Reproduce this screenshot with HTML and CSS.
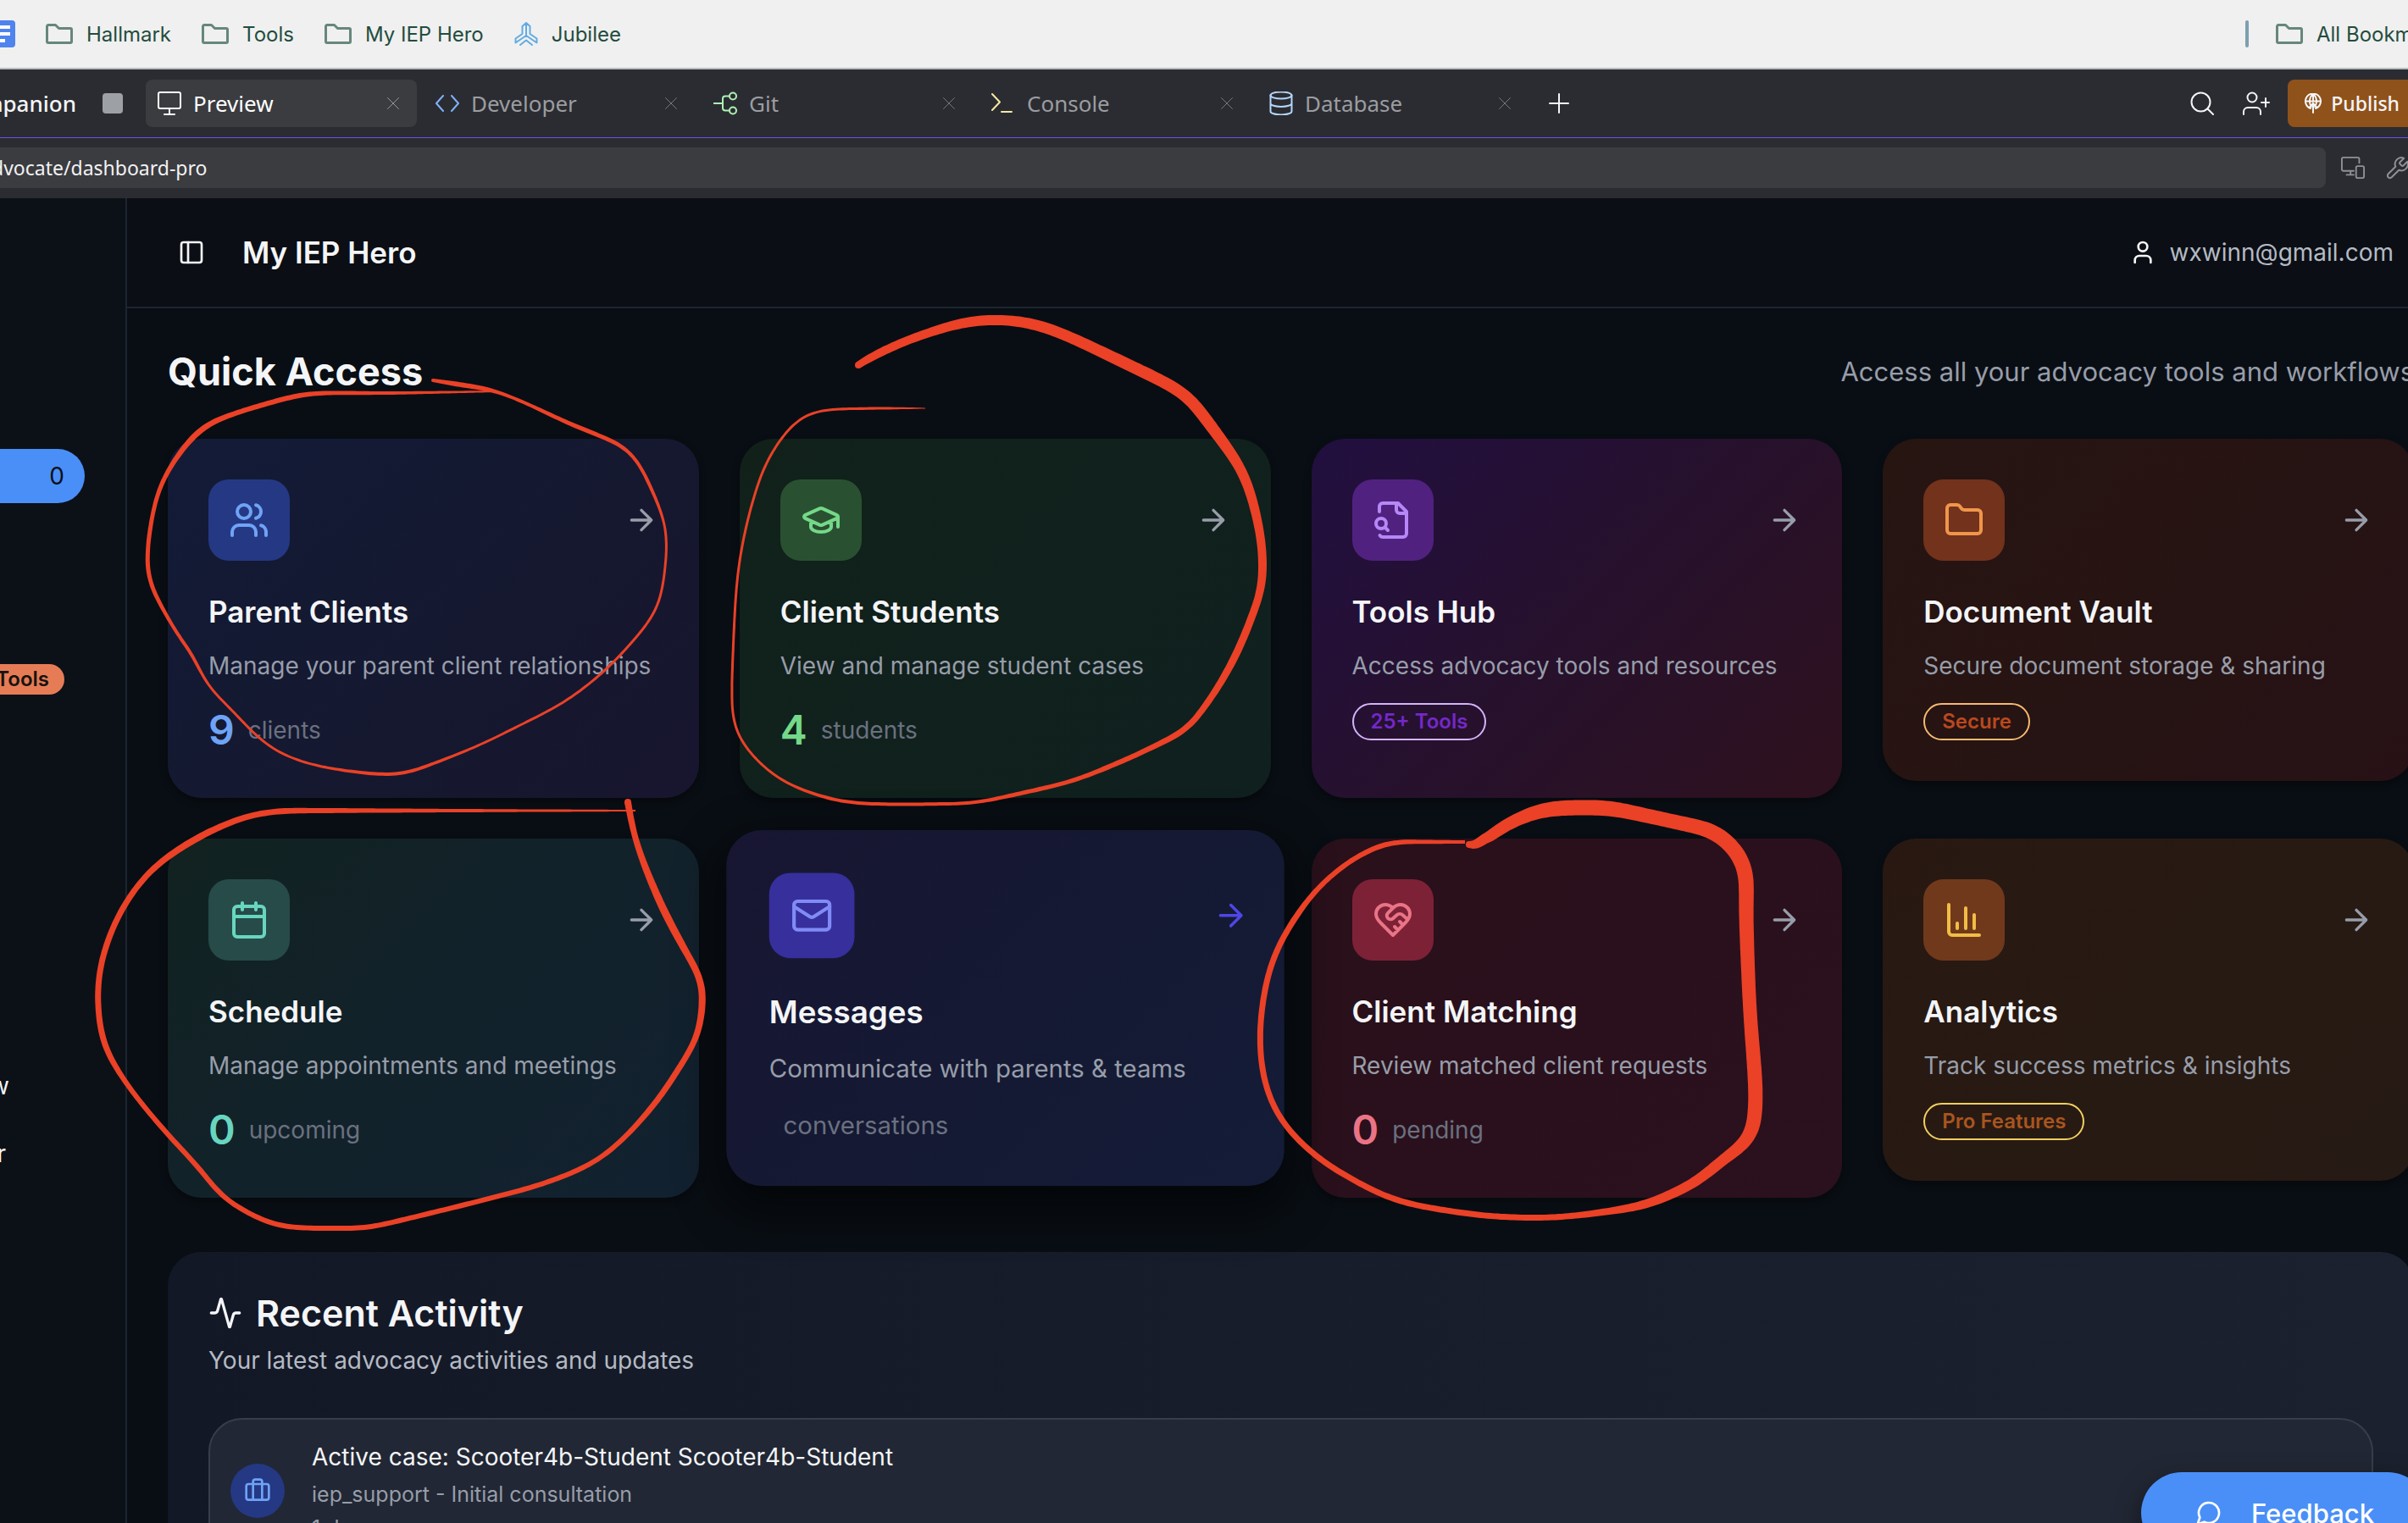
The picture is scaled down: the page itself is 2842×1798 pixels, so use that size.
FILE: index.html
```html
<!DOCTYPE html>
<html lang="en">
<head>
<meta charset="utf-8">
<title>My IEP Hero</title>
<link rel="stylesheet" href="styles.css">
</head>
<body>
<svg class="sprite" aria-hidden="true">
  <symbol id="i-arrow" viewBox="0 0 24 24"><path d="M5 12h14M12 5l7 7-7 7"/></symbol>
  <symbol id="i-users" viewBox="0 0 24 24"><path d="M16 21v-2a4 4 0 0 0-4-4H6a4 4 0 0 0-4 4v2M22 21v-2a4 4 0 0 0-3-3.87M16 3.13a4 4 0 0 1 0 7.75"/><circle cx="9" cy="7" r="4"/></symbol>
  <symbol id="i-cap" viewBox="0 0 24 24"><path d="M21.42 10.922a1 1 0 0 0-.019-1.838L12.83 5.18a2 2 0 0 0-1.66 0L2.6 9.08a1 1 0 0 0 0 1.832l8.57 3.908a2 2 0 0 0 1.66 0zM22 10v6M6 12.5V16a6 3 0 0 0 12 0v-3.5"/></symbol>
  <symbol id="i-file" viewBox="0 0 24 24"><path d="M14 2v4a2 2 0 0 0 2 2h4M4.268 21a2 2 0 0 0 1.727 1H18a2 2 0 0 0 2-2V7l-5-5H6a2 2 0 0 0-2 2v3M9 18l-1.500-1.500"/><circle cx="5" cy="14" r="3"/></symbol>
  <symbol id="i-folder" viewBox="0 0 24 24"><path d="M20 20a2 2 0 0 0 2-2V8a2 2 0 0 0-2-2h-7.900a2 2 0 0 1-1.690-.900L9.600 3.900A2 2 0 0 0 7.930 3H4a2 2 0 0 0-2 2v13a2 2 0 0 0 2 2Z"/></symbol>
  <symbol id="i-calendar" viewBox="0 0 24 24"><path d="M8 2v4M16 2v4M3 10h18"/><rect x="3" y="4" width="18" height="18" rx="2"/></symbol>
  <symbol id="i-mail" viewBox="0 0 24 24"><rect x="2" y="4" width="20" height="16" rx="2"/><path d="m22 7-8.970 5.700a1.940 1.940 0 0 1-2.060 0L2 7"/></symbol>
  <symbol id="i-heart" viewBox="0 0 24 24"><path d="M19 14c1.490-1.460 3-3.210 3-5.500A5.500 5.500 0 0 0 16.500 3c-1.760 0-3 .500-4.500 2-1.500-1.500-2.740-2-4.500-2A5.500 5.500 0 0 0 2 8.500c0 2.300 1.500 4.050 3 5.500l7 7ZM12 5 9.040 7.960a2.170 2.170 0 0 0 0 3.080c.820.820 2.130.850 3 .070l2.070-1.900a2.820 2.820 0 0 1 3.790 0l2.960 2.660M18 15l-2-2M15 18l-2-2"/></symbol>
  <symbol id="i-chart" viewBox="0 0 24 24"><path d="M3 3v16a2 2 0 0 0 2 2h16M18 17V9M13 17V5M8 17v-3"/></symbol>
  <symbol id="i-activity" viewBox="0 0 24 24"><path d="M22 12h-2.480a2 2 0 0 0-1.930 1.460l-2.350 8.360a.250.250 0 0 1-.480 0L9.240 2.180a.250.250 0 0 0-.480 0l-2.350 8.360A2 2 0 0 1 4.490 12H2"/></symbol>
  <symbol id="i-panel" viewBox="0 0 24 24"><rect x="3" y="3" width="18" height="18" rx="2"/><path d="M9 3v18"/></symbol>
  <symbol id="i-user" viewBox="0 0 24 24"><path d="M19 21v-2a4 4 0 0 0-4-4H9a4 4 0 0 0-4 4v2"/><circle cx="12" cy="7" r="4"/></symbol>
  <symbol id="i-chat" viewBox="0 0 24 24"><path d="M7.900 20A9 9 0 1 0 4 16.100L2 22Z"/></symbol>
  <symbol id="i-case" viewBox="0 0 24 24"><path d="M16 20V4a2 2 0 0 0-2-2h-4a2 2 0 0 0-2 2v16"/><rect x="2" y="6" width="20" height="14" rx="2"/></symbol>
  <symbol id="i-bookmark-folder" viewBox="0 0 32 24"><path d="M3 1.500h8.500l4 4H29a1.500 1.500 0 0 1 1.500 1.500v14a1.500 1.500 0 0 1-1.500 1.500H3A1.500 1.500 0 0 1 1.500 21V3A1.500 1.500 0 0 1 3 1.500Z"/></symbol>
  <symbol id="i-close" viewBox="0 0 14 14"><path d="M.500.500l13 13M13.500.500l-13 13"/></symbol>
</svg>

<nav class="bookmarks" aria-label="Bookmarks">
  <a class="doc-mark" href="#" aria-label="Document"><svg viewBox="0 0 18 32"><path class="doc-bg" d="M0 0h14a4 4 0 0 1 4 4v24a4 4 0 0 1-4 4H0z"/><path class="doc-lines" d="M0 8h12M0 16h12M0 24h6"/></svg></a>
  <a class="bookmark" href="#"><svg class="fold"><use href="#i-bookmark-folder"/></svg>Hallmark</a>
  <a class="bookmark" href="#"><svg class="fold"><use href="#i-bookmark-folder"/></svg>Tools</a>
  <a class="bookmark" href="#"><svg class="fold"><use href="#i-bookmark-folder"/></svg>My IEP Hero</a>
  <a class="bookmark" href="#"><svg class="jubilee" viewBox="0 0 28 28"><path d="M14 1v14M9.500 5v9l-8 5.500v5L14 16l12.500 8.500v-5l-8-5.500V5L14 1 9.500 5M7 27l7-5.500 7 5.500"/></svg>Jubilee</a>
  <span class="divider"></span>
  <a class="bookmark all" href="#"><svg class="fold"><use href="#i-bookmark-folder"/></svg>All Bookmarks</a>
</nav>

<header class="toolbar">
  <div class="run"><span>mpanion</span><button class="stop" aria-label="Stop"></button></div>
  <div class="tabs">
    <div class="tab active"><svg class="tab-icon" viewBox="0 0 28 28"><rect x="1" y="1" width="26" height="19" rx="2"/><path d="M14 20v7M8 27h12"/></svg><span>Preview</span><button class="close" aria-label="Close Preview"><svg><use href="#i-close"/></svg></button></div>
    <div class="tab blue"><svg class="tab-icon" viewBox="0 0 28 28"><path d="M9 5l-8 9 8 9M19 5l8 9-8 9"/></svg><span>Developer</span><button class="close" aria-label="Close Developer"><svg><use href="#i-close"/></svg></button></div>
    <div class="tab green"><svg class="tab-icon" viewBox="0 0 28 28"><path d="M0 14h11M19 5.500h-5a3 3 0 0 0-3 3v11a3 3 0 0 0 3 3h5"/><circle cx="23" cy="5.500" r="4"/><circle cx="23" cy="22.500" r="4"/></svg><span>Git</span><button class="close" aria-label="Close Git"><svg><use href="#i-close"/></svg></button></div>
    <div class="tab yellow"><svg class="tab-icon" viewBox="0 0 28 28"><path d="M1 3l9 9.500L1 22M12 24h12"/></svg><span>Console</span><button class="close" aria-label="Close Console"><svg><use href="#i-close"/></svg></button></div>
    <div class="tab sky"><svg class="tab-icon" viewBox="0 0 28 28"><ellipse cx="14" cy="4.500" rx="12.500" ry="4"/><path d="M1.500 4.500v19c0 2.200 5.600 4 12.500 4s12.500-1.800 12.500-4v-19M1.500 14c0 2.200 5.600 4 12.500 4s12.500-1.800 12.500-4"/></svg><span>Database</span><button class="close" aria-label="Close Database"><svg><use href="#i-close"/></svg></button></div>
  </div>
  <button class="icon-btn plus" aria-label="New tab"><svg viewBox="0 0 24 24"><path d="M12 1v22M1 12h22"/></svg></button>
  <div class="tools">
    <button class="icon-btn" aria-label="Search"><svg viewBox="0 0 28 28"><circle cx="12.500" cy="12.500" r="11"/><path d="M20.500 20.500l6.500 6.500"/></svg></button>
    <button class="icon-btn invite" aria-label="Invite"><svg viewBox="0 0 32 28"><circle cx="11" cy="7" r="5.500"/><path d="M1 27v-3a5 5 0 0 1 5-5h10a5 5 0 0 1 5 5v3M27 8v10M22 13h9"/></svg></button>
    <button class="publish"><svg viewBox="0 0 20 24"><path d="M7 18a9 9 0 1 1 6 0M1 9.500h18M10 1C5 5 5 12 8 16M10 1c5 4 5 11 2 15M10 1v9M10 23V12M5.500 17l4.500-5 4.500 5"/></svg>Publish</button>
  </div>
</header>

<div class="addressbar">
  <input class="url" type="text" aria-label="Address" value="dvocate/dashboard-pro">
  <button class="icon-btn dim" aria-label="Device preview"><svg viewBox="0 0 30 28"><path d="M16 18H3a2 2 0 0 1-2-2V3a2 2 0 0 1 2-2h18a2 2 0 0 1 2 2v5M7 23h9M12 18v5"/><rect x="19" y="12" width="10" height="15" rx="2"/></svg></button>
  <button class="icon-btn dim" aria-label="Developer tools"><svg viewBox="0 0 28 28"><path d="M17.500 7.500a1.300 1.300 0 0 0 0 2l2 2a1.300 1.300 0 0 0 2 0l4.700-4.700a7.500 7.500 0 0 1-9.900 9.900l-8.600 8.600a2.600 2.600 0 0 1-4-4l8.600-8.600A7.500 7.500 0 0 1 22.200 2.800z"/></svg></button>
</div>

<div class="app">
  <aside class="sidebar">
    <a class="side-pill" href="#">0</a>
    <span class="side-badge">Tools</span>
    <a class="side-link" href="#">w</a>
    <a class="side-link" href="#">r</a>
  </aside>
  <div class="content">
    <header class="app-header">
      <button class="icon-btn" aria-label="Toggle sidebar"><svg class="i32"><use href="#i-panel"/></svg></button>
      <h1>My IEP Hero</h1>
      <div class="account"><svg class="i32"><use href="#i-user"/></svg><span>wxwinn@gmail.com</span></div>
    </header>
    <main>
      <div class="section-head">
        <h2>Quick Access</h2>
        <p>Access all your advocacy tools and workflows</p>
      </div>
      <div class="grid">
        <a class="card parents" href="#">
          <span class="card-top"><span class="tile"><svg><use href="#i-users"/></svg></span><svg class="arrow"><use href="#i-arrow"/></svg></span>
          <span class="card-title">Parent Clients</span>
          <span class="card-desc">Manage your parent client relationships</span>
          <span class="stat"><b>9</b><span>clients</span></span>
        </a>
        <a class="card students" href="#">
          <span class="card-top"><span class="tile"><svg><use href="#i-cap"/></svg></span><svg class="arrow"><use href="#i-arrow"/></svg></span>
          <span class="card-title">Client Students</span>
          <span class="card-desc">View and manage student cases</span>
          <span class="stat"><b>4</b><span>students</span></span>
        </a>
        <a class="card hub" href="#">
          <span class="card-top"><span class="tile"><svg><use href="#i-file"/></svg></span><svg class="arrow"><use href="#i-arrow"/></svg></span>
          <span class="card-title">Tools Hub</span>
          <span class="card-desc">Access advocacy tools and resources</span>
          <span class="badge">25+ Tools</span>
        </a>
        <a class="card vault short" href="#">
          <span class="card-top"><span class="tile"><svg><use href="#i-folder"/></svg></span><svg class="arrow"><use href="#i-arrow"/></svg></span>
          <span class="card-title">Document Vault</span>
          <span class="card-desc">Secure document storage &amp; sharing</span>
          <span class="badge">Secure</span>
        </a>
        <a class="card schedule" href="#">
          <span class="card-top"><span class="tile"><svg><use href="#i-calendar"/></svg></span><svg class="arrow"><use href="#i-arrow"/></svg></span>
          <span class="card-title">Schedule</span>
          <span class="card-desc">Manage appointments and meetings</span>
          <span class="stat"><b>0</b><span>upcoming</span></span>
        </a>
        <a class="card messages short raised" href="#">
          <span class="card-top"><span class="tile"><svg><use href="#i-mail"/></svg></span><svg class="arrow"><use href="#i-arrow"/></svg></span>
          <span class="card-title">Messages</span>
          <span class="card-desc">Communicate with parents &amp; teams</span>
          <span class="stat"><b></b><span>conversations</span></span>
        </a>
        <a class="card matching" href="#">
          <span class="card-top"><span class="tile"><svg><use href="#i-heart"/></svg></span><svg class="arrow"><use href="#i-arrow"/></svg></span>
          <span class="card-title">Client Matching</span>
          <span class="card-desc">Review matched client requests</span>
          <span class="stat"><b>0</b><span>pending</span></span>
        </a>
        <a class="card analytics short" href="#">
          <span class="card-top"><span class="tile"><svg><use href="#i-chart"/></svg></span><svg class="arrow"><use href="#i-arrow"/></svg></span>
          <span class="card-title">Analytics</span>
          <span class="card-desc">Track success metrics &amp; insights</span>
          <span class="badge">Pro Features</span>
        </a>
      </div>
      <section class="activity">
        <h2><svg><use href="#i-activity"/></svg>Recent Activity</h2>
        <p class="activity-sub">Your latest advocacy activities and updates</p>
        <div class="entry">
          <span class="entry-icon"><svg class="i32"><use href="#i-case"/></svg></span>
          <div>
            <p class="entry-title">Active case: Scooter4b-Student Scooter4b-Student</p>
            <p class="entry-sub">iep_support - Initial consultation</p>
            <p class="entry-sub">1 day ago</p>
          </div>
        </div>
      </section>
    </main>
  </div>
</div>
<button class="feedback"><svg class="i32"><use href="#i-chat"/></svg>Feedback</button>
<svg class="marker" id="marker" aria-hidden="true"></svg>
<script src="marker.js"></script>
</body>
</html>
```
FILE: styles.css
```css
* { box-sizing: border-box; }
html, body { height: 100%; }
body {
  margin: 0;
  overflow: hidden;
  position: relative;
  display: flex;
  flex-direction: column;
  background: #090e14;
  color: #f4f5f7;
  font-family: Inter, sans-serif;
  font-size: 28px;
}
h1, h2, p { margin: 0; }
a { color: inherit; text-decoration: none; }
button { font: inherit; color: inherit; background: none; border: 0; padding: 0; }
svg { fill: none; stroke: currentColor; stroke-width: 2; stroke-linecap: round; stroke-linejoin: round; display: block; flex: none; }
.sprite { position: absolute; width: 0; height: 0; }
.i32 { width: 32px; height: 32px; }

/* browser bookmarks */
.bookmarks {
  flex: none;
  display: flex;
  align-items: center;
  height: 82px;
  background: #f0f0f0;
  border-bottom: 2px solid #b7bbbf;
  color: #234c3e;
  font-size: 24px;
  overflow: hidden;
}
.doc-mark { flex: none; margin-right: 36px; }
.doc-mark svg { width: 18px; height: 32px; }
.doc-bg { fill: #4f83ee; stroke: none; }
.doc-lines { stroke: #fff; stroke-width: 4; stroke-linecap: butt; }
.bookmark { flex: none; display: flex; align-items: center; gap: 16px; margin-right: 36px; }
.bookmark.all { width: 156px; margin: 0; white-space: nowrap; }
.fold { width: 32px; height: 24px; color: #66877b; stroke-width: 3; }
.jubilee { width: 28px; height: 28px; color: #62abe0; }
.divider { margin: 0 32px 0 auto; width: 4px; height: 32px; border-radius: 2px; background: #7d9fb0; flex: none; }

/* workspace tabs */
.toolbar {
  flex: none;
  display: flex;
  align-items: center;
  height: 81px;
  background: #2b2c31;
  border-bottom: 1px solid #6d51ee;
  font-family: "Noto Sans", sans-serif;
  font-size: 26px;
  overflow: hidden;
}
.run { width: 172px; flex: none; display: flex; align-items: center; justify-content: flex-end; gap: 31px; padding-right: 27px; font-weight: 500; }
.stop { width: 24px; height: 24px; border-radius: 4px; background: #9da1a6; flex: none; }
.tabs { display: flex; gap: 8px; flex: none; }
.tab { width: 320px; height: 56px; border-radius: 8px; padding: 0 16px 0 14px; display: flex; align-items: center; gap: 14px; color: #9b9da1; }
.tab.active { background: #3b3c40; color: #fff; }
.tab-icon { width: 28px; height: 28px; }
.blue .tab-icon { color: #7db2fa; }
.green .tab-icon { color: #aef0b5; }
.yellow .tab-icon { color: #f5e8a3; }
.sky .tab-icon { color: #b4d6fb; }
.close { width: 24px; height: 24px; margin-left: auto; display: grid; place-items: center; color: #77797d; }
.active .close { color: #96989c; }
.close svg { width: 14px; height: 14px; stroke-width: 1; }
.icon-btn { flex: none; }
.icon-btn svg { height: 28px; width: 28px; }
.plus { margin-left: 24px; }
.plus svg { width: 24px; height: 24px; }
.tools { margin-left: auto; display: flex; align-items: center; gap: 34px; margin-right: -10px; }
.tools .invite svg { width: 32px; }
.publish { height: 56px; margin-left: -13px; padding: 0 20px; border-radius: 8px; background: #8f521b; display: flex; align-items: center; gap: 11px; font-size: 23px; font-weight: 500; }
.publish svg { width: 20px; height: 24px; stroke-width: 2; }

/* address bar */
.addressbar { flex: none; display: flex; align-items: center; gap: 24px; height: 71px; background: #2b2c31; overflow: hidden; padding-bottom: 1px; }
.url { flex: 1; height: 48px; margin-right: -6px; padding: 0 8px 0 0; text-indent: -10px; border: 0; border-radius: 0 8px 8px 0; background: #3b3c40; color: #f2f2f3; font-family: "Noto Sans", sans-serif; font-size: 23px; }
.dim { color: #8f9195; }
.dim:last-child { margin-right: -1px; }

/* application */
.app { flex: 1; min-height: 0; display: flex; width: calc(100% + 55px); }
.sidebar { flex: none; width: 150px; background: #0c1118; border-right: 2px solid #1b2530; padding-top: 296px; display: flex; flex-direction: column; align-items: flex-start; overflow: hidden; }
.side-pill { width: 100px; height: 64px; line-height: 64px; padding-right: 24px; text-align: right; border-radius: 0 32px 32px 0; background: #4a8ff7; color: #0b1018; flex: none; }
.side-badge { width: 76px; height: 36px; line-height: 36px; margin: 190px 0 442px; padding-right: 18px; display: flex; justify-content: flex-end; border-radius: 0 18px 18px 0; background: #e67c56; color: #16130f; font-size: 24px; font-weight: 600; flex: none; }
.side-link { width: 11px; height: 40px; line-height: 40px; display: flex; justify-content: flex-end; margin-bottom: 40px; flex: none; }
.side-link:last-child { width: 7px; }
.content { flex: 1; min-width: 0; overflow: hidden; }
.app-header { height: 130px; padding: 0 72px 0 60px; display: flex; align-items: center; border-bottom: 2px solid #1b2530; background: #0b0e14; }
.app-header .icon-btn svg { width: 32px; height: 32px; }
.app-header h1 { margin-left: 44px; font-size: 35px; font-weight: 600; }
.account { margin-left: auto; display: flex; align-items: center; gap: 16px; color: #b4bac4; }
.account svg { color: #f4f5f7; }
main { padding: 46px 48px 48px; }
.section-head { display: flex; justify-content: space-between; align-items: center; margin-bottom: 50px; }
.section-head h2 { font-size: 45px; line-height: 58px; font-weight: 700; }
.section-head p { font-size: 31px; line-height: 58px; color: #979da9; }

.grid { display: grid; grid-template-columns: repeat(4, minmax(0, 1fr)); gap: 48px; margin-bottom: 64px; }
.card { display: flex; flex-direction: column; align-items: flex-start; padding: 48px; border-radius: 40px; box-shadow: 0 4px 8px rgba(0, 0, 0, .35); white-space: nowrap; }
.short { align-self: start; }
.card-top { display: flex; justify-content: space-between; align-items: center; width: 100%; }
.tile { width: 96px; height: 96px; border-radius: 24px; display: grid; place-items: center; }
.tile svg { width: 48px; height: 48px; }
.arrow { width: 40px; height: 40px; color: #979da9; }
.card-title { margin-top: 32px; font-size: 35px; line-height: 56px; font-weight: 600; color: #f4f5f7; }
.card-desc { margin-top: 16px; line-height: 40px; color: #979da9; }
.stat { margin-top: 24px; display: flex; align-items: center; gap: 16px; line-height: 40px; color: #6a7180; }
.stat b { font-size: 48px; line-height: 64px; font-weight: 600; }
.stat b:empty { display: block; }
.badge { margin-top: 24px; height: 44px; line-height: 40px; padding: 0 20px; border: 2px solid; border-radius: 22px; font-size: 24px; font-weight: 600; }

.parents { background: linear-gradient(135deg, #131b37, #15182f 60%, #18152f); }
.parents .tile { background: #253884; color: #6fa3f5; }
.parents b { color: #6fa3f5; }
.students { background: linear-gradient(135deg, #11211a, #10201f); }
.students .tile { background: #295131; color: #75d889; }
.students b { color: #75d889; }
.hub { background: linear-gradient(135deg, #210f40, #27112b 55%, #2e111d); }
.hub .tile { background: #51217f; color: #b587f7; }
.hub .badge { border-color: #d4b4fb; color: #7428c8; }
.vault { background: linear-gradient(135deg, #271512, #261313 60%, #271116); }
.vault .tile { background: #72321c; color: #f0964a; }
.vault .badge { border-color: #f6b970; color: #b9481f; }
.schedule { background: linear-gradient(135deg, #112220, #122229 40%, #122130); }
.schedule .tile { background: #264b49; color: #68d5bf; }
.schedule b { color: #68d5bf; }
.messages { background: linear-gradient(135deg, #181632, #151933 50%, #141c37); }
.messages .tile { background: #362f9c; color: #818bf6; }
.messages .arrow { color: #4f46e5; transform: translateX(8px); }
.raised { transform: scale(1.05); box-shadow: 0 20px 50px 6px rgba(0, 0, 0, .6); }
.matching { background: linear-gradient(135deg, #29101a, #2b101e); }
.matching .tile { background: #7d2137; color: #ea7486; }
.matching b { color: #ea7486; }
.analytics { background: linear-gradient(135deg, #291812, #271a13 50%, #261a14); }
.analytics .tile { background: #70391b; color: #f2bd45; }
.analytics .badge { border-color: #f2cf5e; color: #a9551f; }

.activity { padding: 40px 48px 48px; min-height: 400px; border-radius: 40px; background: linear-gradient(90deg, #131826, #181d2b 50%, #1b212e); }
.activity h2 { display: flex; align-items: center; gap: 16px; font-size: 43px; line-height: 64px; font-weight: 600; }
.activity h2 svg { width: 40px; height: 40px; }
.activity-sub { line-height: 40px; margin: 4px 0 48px; color: #b4bac4; }
.entry { display: flex; align-items: center; gap: 32px; padding: 24px; border: 2px solid #373e4a; border-radius: 40px; background: #212734; }
.entry-icon { width: 64px; height: 64px; border-radius: 50%; background: #253884; color: #6fa3f5; display: grid; place-items: center; flex: none; }
.entry-title { line-height: 40px; }
.entry-sub { margin-top: 8px; font-size: 25px; line-height: 32px; color: #979da9; }

.feedback { position: absolute; right: -24px; bottom: -36px; height: 96px; padding: 0 64px; border-radius: 48px; background: #4a8ff7; color: #fff; display: flex; align-items: center; gap: 34px; font-size: 31px; font-weight: 500; box-shadow: 0 12px 30px rgba(0, 0, 0, .5); }
.marker { position: absolute; left: 0; top: 0; width: 100%; height: 100%; pointer-events: none; overflow: hidden; stroke: none; fill: #ea4127; }
```
FILE: marker.js
```js
// Pen strokes drawn over the page: each point is x, y, pen width.
const strokes = [
  [511,449,4, 542,454,6, 575,459,5, 591,464,4, 623,477,4, 672,500,5, 721,520,5, 743,533,4, 760,558,4, 772,585,4, 782,609,3, 787,640,3, 783,687,3, 777,713,3, 765,735,3, 737,768,3, 710,795,3, 667,828,3, 612,857,3, 558,883,3, 488,910,4, 466,914,4, 434,913,4, 374,904,3, 331,889,3, 303,869,3, 282,847,3, 244,807,3, 230,778,4, 206,743,4, 180,695,5, 174,669,5, 176,632,5, 187,580,5, 209,539,6, 238,506,7, 266,492,6, 303,480,6, 347,468,6, 380,464,5, 461,464,4, 586,462,2],
  [1013,431,8, 1033,419,10, 1073,401,10, 1118,386,11, 1149,379,12, 1189,378,12, 1225,384,13, 1265,399,13, 1345,437,14, 1381,455,14, 1404,471,14, 1430,504,14, 1464,553,12, 1480,597,11, 1489,643,10, 1490,678,10, 1486,704,9, 1462,766,9, 1435,815,8, 1404,857,7, 1386,869,7, 1350,887,6, 1314,903,6, 1265,922,5, 1207,936,5, 1154,947,4, 1118,949,4, 1029,949,4, 980,943,4, 926,923,3, 890,894,3, 870,865,3, 864,835,3, 865,773,3, 870,685,3, 881,620,3, 899,559,3, 917,525,3, 939,498,3, 962,486,3, 988,483,3, 1046,482,3, 1092,482,1],
  [741,947,8, 749,987,7, 764,1030,8, 786,1080,9, 813,1130,8, 828,1160,8, 828,1197,8, 821,1227,7, 802,1260,7, 775,1300,7, 737,1343,6, 699,1373,6, 645,1396,6, 585,1413,6, 488,1437,6, 434,1449,6, 390,1450,6, 347,1449,6, 314,1442,6, 266,1415,6, 233,1377,6, 190,1330,6, 152,1283,6, 126,1240,7, 117,1203,7, 116,1160,7, 125,1117,7, 146,1070,7, 179,1027,7, 228,992,8, 282,967,7, 325,958,7, 379,957,6, 542,957,4, 750,957,2],
  [1734,997,8, 1746,996,12, 1768,980,14, 1791,967,15, 1819,957,17, 1842,954,18, 1897,954,18, 1934,961,17, 1989,973,17, 2021,981,18, 2039,994,18, 2055,1014,18, 2061,1035,18, 2061,1085,17, 2065,1187,16, 2071,1268,17, 2072,1302,17, 2069,1332,17, 2060,1349,15, 2035,1368,13, 2003,1394,12, 1970,1411,11, 1938,1423,10, 1892,1431,8, 1837,1437,7, 1782,1437,7, 1727,1432,7, 1649,1417,7, 1585,1386,7, 1543,1356,7, 1511,1320,7, 1493,1278,7, 1487,1227,7, 1492,1173,7, 1504,1129,7, 1525,1089,7, 1557,1047,6, 1599,1013,6, 1640,995,6, 1667,994,5, 1729,994,4]
];

function spline(a, b, c, d, t) {
  return 0.5 * (2 * b + (c - a) * t + (2 * a - 5 * b + 4 * c - d) * t * t + (3 * b - a - 3 * c + d) * t * t * t);
}

// Even steps along the line, then a short running average to round the bends.
function smooth(line) {
  const step = 4, even = [line[0]];
  let rest = step;
  for (let i = 1; i < line.length; i++) {
    let a = line[i - 1];
    const b = line[i];
    let len = Math.hypot(b[0] - a[0], b[1] - a[1]);
    while (len >= rest) {
      const t = rest / len;
      a = a.map((v, k) => v + (b[k] - v) * t);
      even.push(a);
      len -= rest;
      rest = step;
    }
    rest -= len;
  }
  even.push(line[line.length - 1]);
  return even.map((q, i) => {
    const r = Math.min(5, i, even.length - 1 - i), part = even.slice(i - r, i + r + 1);
    return q.map((v, k) => part.reduce((sum, p) => sum + p[k], 0) / part.length);
  });
}

function outline(flat) {
  const pts = [];
  for (let i = 0; i < flat.length; i += 3) pts.push(flat.slice(i, i + 3));
  const dense = [];
  for (let i = 0; i < pts.length - 1; i++) {
    const p = [pts[Math.max(i - 1, 0)], pts[i], pts[i + 1], pts[Math.min(i + 2, pts.length - 1)]];
    for (let s = 0; s < 8; s++) dense.push([0, 1, 2].map(k => spline(p[0][k], p[1][k], p[2][k], p[3][k], s / 8)));
  }
  dense.push(pts[pts.length - 1]);
  const line = smooth(dense);
  const left = [], right = [];
  line.forEach((q, i) => {
    const a = line[Math.max(i - 1, 0)], b = line[Math.min(i + 1, line.length - 1)];
    const len = Math.hypot(b[0] - a[0], b[1] - a[1]) || 1;
    const nx = -(b[1] - a[1]) / len * q[2] / 2, ny = (b[0] - a[0]) / len * q[2] / 2;
    left.push((q[0] + nx).toFixed(1) + " " + (q[1] + ny).toFixed(1));
    right.unshift((q[0] - nx).toFixed(1) + " " + (q[1] - ny).toFixed(1));
  });
  return "M" + left.concat(right).join("L") + "Z";
}

const ns = "http://www.w3.org/2000/svg";
const layer = document.getElementById("marker");
for (const s of strokes) {
  const path = document.createElementNS(ns, "path");
  path.setAttribute("d", outline(s));
  layer.append(path);
  const cap = document.createElementNS(ns, "circle");
  cap.setAttribute("cx", s[0]);
  cap.setAttribute("cy", s[1]);
  cap.setAttribute("r", s[2] / 2);
  layer.append(cap);
}
```
